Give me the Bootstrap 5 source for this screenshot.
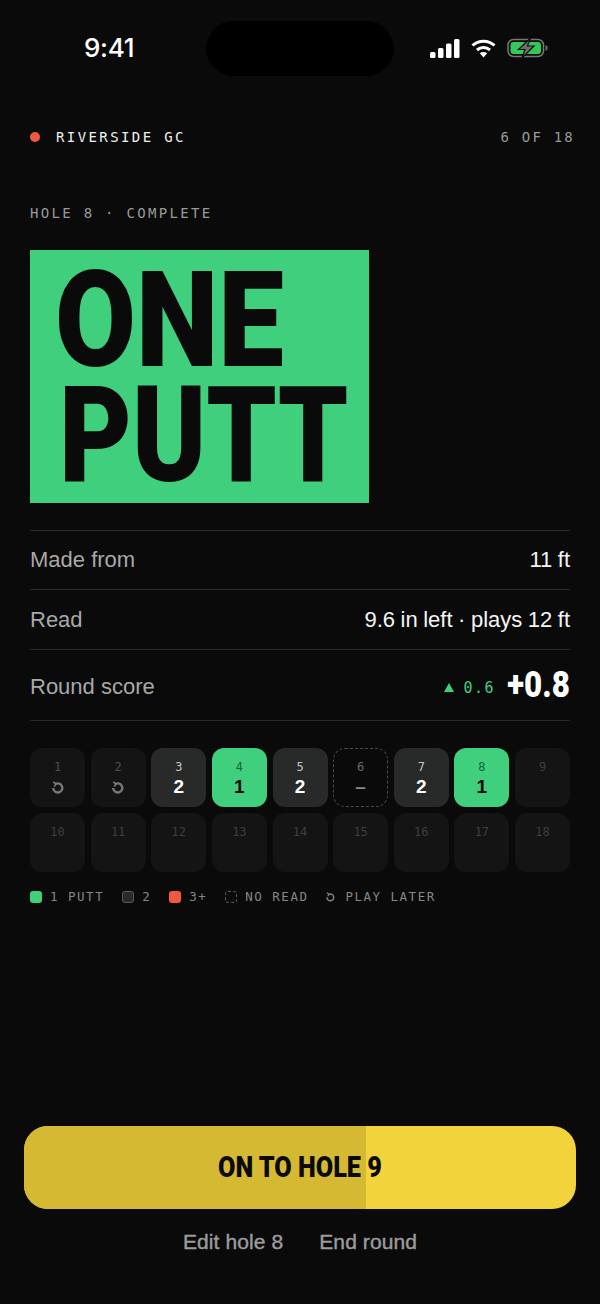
<!DOCTYPE html>
<html lang="en">
<head>
<meta charset="UTF-8">
<meta name="viewport" content="width=device-width, initial-scale=1.0">
<title>One Putt</title>
<link href="https://cdn.jsdelivr.net/npm/bootstrap@5.3.3/dist/css/bootstrap.min.css" rel="stylesheet">
<style>
    html, body { height: 100%; }
    body { background: #0a0a0a; color: #fff; font-family: "Liberation Sans", Arial, sans-serif; }
    .screen { height: 1304px; width: 600px; overflow: hidden; }

    /* status bar */
    .status-bar { height: 76px; padding: 21px 0 0 84px; }
    .clock { font: 500 26px/54px Inter, sans-serif; letter-spacing: -.3px; width: 122px; }
    .island { width: 188px; height: 55px; border-radius: 28px; background: #000; }
    .status-icons { margin-left: 36px; height: 54px; }
    .sig-icon { margin-right: 11px; }
    .wifi-icon { margin-right: 11px; }

    .mono { font-family: "DejaVu Sans Mono", "Liberation Mono", monospace; }
    .top-row { padding: 0 25px 0 30px; margin-top: 52px; height: 18px; }
    .live-dot { width: 10px; height: 10px; border-radius: 50%; background: #f15a40; margin-right: 16px; }
    .club { font-size: 14px; letter-spacing: 2.4px; color: #f0f0f0; }
    .hole-count { font-size: 14px; letter-spacing: 2.2px; color: #999; }
    .hole-label { margin: 58px 0 0 30px; font-size: 14px; letter-spacing: 2.3px; color: #999; line-height: 18px; }

    .hero-box { margin: 28px 0 0 30px; width: 339px; height: 253px; background: #3fcf7d; color: #0a0a0a; padding: 13px 0 0 25px; }
    .hero-line { font: 900 134px/115px Roboto, "Liberation Sans", sans-serif; transform-origin: 0 0; white-space: nowrap; }
    .hero-one { transform: scaleX(.875); }
    .hero-putt { transform: scaleX(.835); margin-left: 4px; }

    .stat-list { margin: 27px 30px 0; }
    .stat-row { border-top: 1px solid #2a2a2a; color: #a8a8a8; font: 400 22px/30px "Liberation Sans", Arial, sans-serif; }
    .stat-row:last-child { border-bottom: 1px solid #2a2a2a; }
    .stat-val { color: #f5f5f5; word-spacing: -.6px; }
    .row-made { height: 59px; }
    .row-read { height: 60px; }
    .row-score { height: 72px; }
    .score-label { padding-top: 3px; }
    .delta { font-size: 15px; letter-spacing: 1.5px; color: #3fcf7d; margin-right: 3px; line-height: 20px; padding-top: 5px; }
    .delta-tri { margin-right: 10px; }
    .score-big { display: inline-block; font: 900 36px/40px Roboto, "Liberation Sans", sans-serif; color: #fff; transform: scaleX(.87); transform-origin: 100% 50%; }

    .hole-grid { display: grid; grid-template-columns: repeat(9, 55px); gap: 6px 5.625px; margin: 27px 0 0 30px; }
    .hole-cell { height: 59px; border-radius: 12px; background: #141414; text-align: center; color: #3e3e3e; }
    .hole-cell .num { display: block; font-size: 12px; line-height: 14px; padding-top: 12px; font-family: "DejaVu Sans Mono", monospace; }
    .hole-cell .val { display: block; font: 700 19px/22px "Liberation Sans", sans-serif; margin-top: 2px; }
    .hole-cell.later { color: #4c4c4c; }
    .hole-cell.two { background: #282a2a; color: #c4c4c4; }
    .hole-cell.two .val { color: #fff; }
    .hole-cell.one { background: #3fcf7d; color: #14663a; }
    .hole-cell.one .val { color: #0a0a0a; }
    .hole-cell.skip { background: #0a0a0a; border: 1px dashed #4a4a4a; color: #6b6b6b; }
    .hole-cell.skip .num { padding-top: 11px; }
    .hole-cell.skip .val { color: #8a8a8a; }
    .later-icon { display: block; margin: 7px auto 0; }

    .legend { margin: 16px 0 0 30px; gap: 18px; font-size: 12.5px; letter-spacing: 1.5px; color: #868686; line-height: 18px; }
    .swatch { width: 12px; height: 12px; border-radius: 3px; margin-right: 8px; }
    .sw-one { background: #3fcf7d; }
    .sw-two { background: #282a2a; border: 1px solid #5a5a5a; }
    .sw-three { background: #f15a40; }
    .sw-none { border: 1px dashed #5a5a5a; }
    .legend-later { margin-right: 10px; }

    .cta-wrap { margin: 0 24px; padding-top: 220px; }
    .cta { position: relative; display: block; width: 552px; height: 83px; border: 0; border-radius: 24px; background: #f2d33b; overflow: hidden; padding: 0; }
    .cta-fill { position: absolute; left: 0; top: 0; bottom: 0; width: 342px; background: #d6b933; }
    .cta-label { position: relative; display: block; font: 900 29px/83px Roboto, "Liberation Sans", sans-serif; color: #0a0a0a; transform: scaleX(.87); white-space: nowrap; }
    .links { margin-top: 18px; gap: 36px; }
    .links a { font: 400 21px/30px "Liberation Sans", Arial, sans-serif; letter-spacing: .1px; -webkit-text-stroke: .4px #9c9c9c; color: #9c9c9c; text-decoration: none; }
</style>
</head>
<body>
<div class="screen">
    <div class="status-bar d-flex align-items-start">
        <div class="clock">9:41</div>
        <div class="island"></div>
        <div class="status-icons d-flex align-items-center">
            <svg class="sig-icon" width="30" height="19" viewBox="0 0 30 19" fill="#fff"><rect x="0" y="13" width="5.5" height="6" rx="1.5"/><rect x="8" y="9" width="5.5" height="10" rx="1.5"/><rect x="16" y="4.500" width="5.500" height="14.500" rx="1.5"/><rect x="24" y="0" width="5.500" height="19" rx="1.5"/></svg>
            <svg class="wifi-icon" width="25" height="19" viewBox="0 0 25 19" fill="none" stroke="#fff" stroke-width="3"><path d="M1.500 6.500C7.500 .8 17.500 .8 23.500 6.500"/><path d="M6 11c3.800-3.300 9.200-3.300 13 0"/><path d="M12.500 18.500l-3.700-4.300c2-1.600 5.400-1.600 7.400 0z" fill="#fff" stroke="none"/></svg>
            <svg width="41" height="20" viewBox="0 0 41 20" fill="none"><rect x="1" y="1.500" width="35.500" height="17" rx="5.500" stroke="#777" stroke-width="1.500"/><rect x="3.500" y="4" width="30.500" height="12" rx="3" fill="#34c759"/><path d="M38.500 7v6c1.500-.4 2.300-1.600 2.300-3s-.8-2.600-2.300-3z" fill="#666"/><path d="M23.500 0L11.500 11.500h6.500L15 20l12-12h-6.500z" fill="#6f6f6f" stroke="#0a0a0a" stroke-width="1.200"/></svg>
        </div>
    </div>

    <div class="top-row d-flex align-items-center mono">
        <span class="live-dot"></span>
        <span class="club">RIVERSIDE GC</span>
        <span class="hole-count ms-auto">6 OF 18</span>
    </div>

    <div class="hole-label mono">HOLE 8 · COMPLETE</div>

    <div class="hero-box">
        <div class="hero-line hero-one">ONE</div>
        <div class="hero-line hero-putt">PUTT</div>
    </div>

    <div class="stat-list">
        <div class="stat-row row-made d-flex justify-content-between align-items-center"><span>Made from</span><span class="stat-val">11 ft</span></div>
        <div class="stat-row row-read d-flex justify-content-between align-items-center"><span>Read</span><span class="stat-val">9.6 in left · plays 12 ft</span></div>
        <div class="stat-row row-score d-flex justify-content-between align-items-center">
            <span class="score-label">Round score</span>
            <span class="d-flex align-items-center"><span class="delta mono d-flex align-items-center"><svg class="delta-tri" width="10" height="9" viewBox="0 0 10 9" fill="#3fcf7d"><path d="M5 0l5 9H0z"/></svg>0.6</span><span class="score-big">+0.8</span></span>
        </div>
    </div>

    <div class="hole-grid">
        <div class="hole-cell later"><span class="num">1</span><svg class="later-icon" width="12" height="13" viewBox="0 0 14 15" fill="none" stroke="#777" stroke-width="2.800"><path d="M4 3.500a5.300 5.300 0 1 1-2.600 4.500"/><path d="M1.500 1l3.200 2.400-2 3" stroke-width="2"/></svg></div>
        <div class="hole-cell later"><span class="num">2</span><svg class="later-icon" width="12" height="13" viewBox="0 0 14 15" fill="none" stroke="#777" stroke-width="2.800"><path d="M4 3.500a5.300 5.300 0 1 1-2.600 4.500"/><path d="M1.500 1l3.200 2.400-2 3" stroke-width="2"/></svg></div>
        <div class="hole-cell two"><span class="num">3</span><span class="val">2</span></div>
        <div class="hole-cell one"><span class="num">4</span><span class="val">1</span></div>
        <div class="hole-cell two"><span class="num">5</span><span class="val">2</span></div>
        <div class="hole-cell skip"><span class="num">6</span><span class="val">–</span></div>
        <div class="hole-cell two"><span class="num">7</span><span class="val">2</span></div>
        <div class="hole-cell one"><span class="num">8</span><span class="val">1</span></div>
        <div class="hole-cell"><span class="num">9</span></div>
        <div class="hole-cell"><span class="num">10</span></div>
        <div class="hole-cell"><span class="num">11</span></div>
        <div class="hole-cell"><span class="num">12</span></div>
        <div class="hole-cell"><span class="num">13</span></div>
        <div class="hole-cell"><span class="num">14</span></div>
        <div class="hole-cell"><span class="num">15</span></div>
        <div class="hole-cell"><span class="num">16</span></div>
        <div class="hole-cell"><span class="num">17</span></div>
        <div class="hole-cell"><span class="num">18</span></div>
    </div>

    <div class="legend d-flex align-items-center mono">
        <span class="d-flex align-items-center"><span class="swatch sw-one"></span>1 PUTT</span>
        <span class="d-flex align-items-center"><span class="swatch sw-two"></span>2</span>
        <span class="d-flex align-items-center"><span class="swatch sw-three"></span>3+</span>
        <span class="d-flex align-items-center"><span class="swatch sw-none"></span>NO READ</span>
        <span class="d-flex align-items-center"><svg class="legend-later" width="9" height="10" viewBox="0 0 14 15" fill="none" stroke="#868686" stroke-width="2.200"><path d="M4 3.500a5.300 5.300 0 1 1-2.600 4.500"/><path d="M1.500 1l3.200 2.400-2 3" stroke-width="1.800"/></svg>PLAY LATER</span>
    </div>

    <div class="cta-wrap">
        <button class="cta" type="button"><span class="cta-fill"></span><span class="cta-label">ON TO HOLE 9</span></button>
        <div class="links d-flex justify-content-center"><a href="#">Edit hole 8</a><a href="#">End round</a></div>
    </div>
</div>
<script src="https://cdn.jsdelivr.net/npm/bootstrap@5.3.3/dist/js/bootstrap.bundle.min.js"></script>
</body>
</html>
